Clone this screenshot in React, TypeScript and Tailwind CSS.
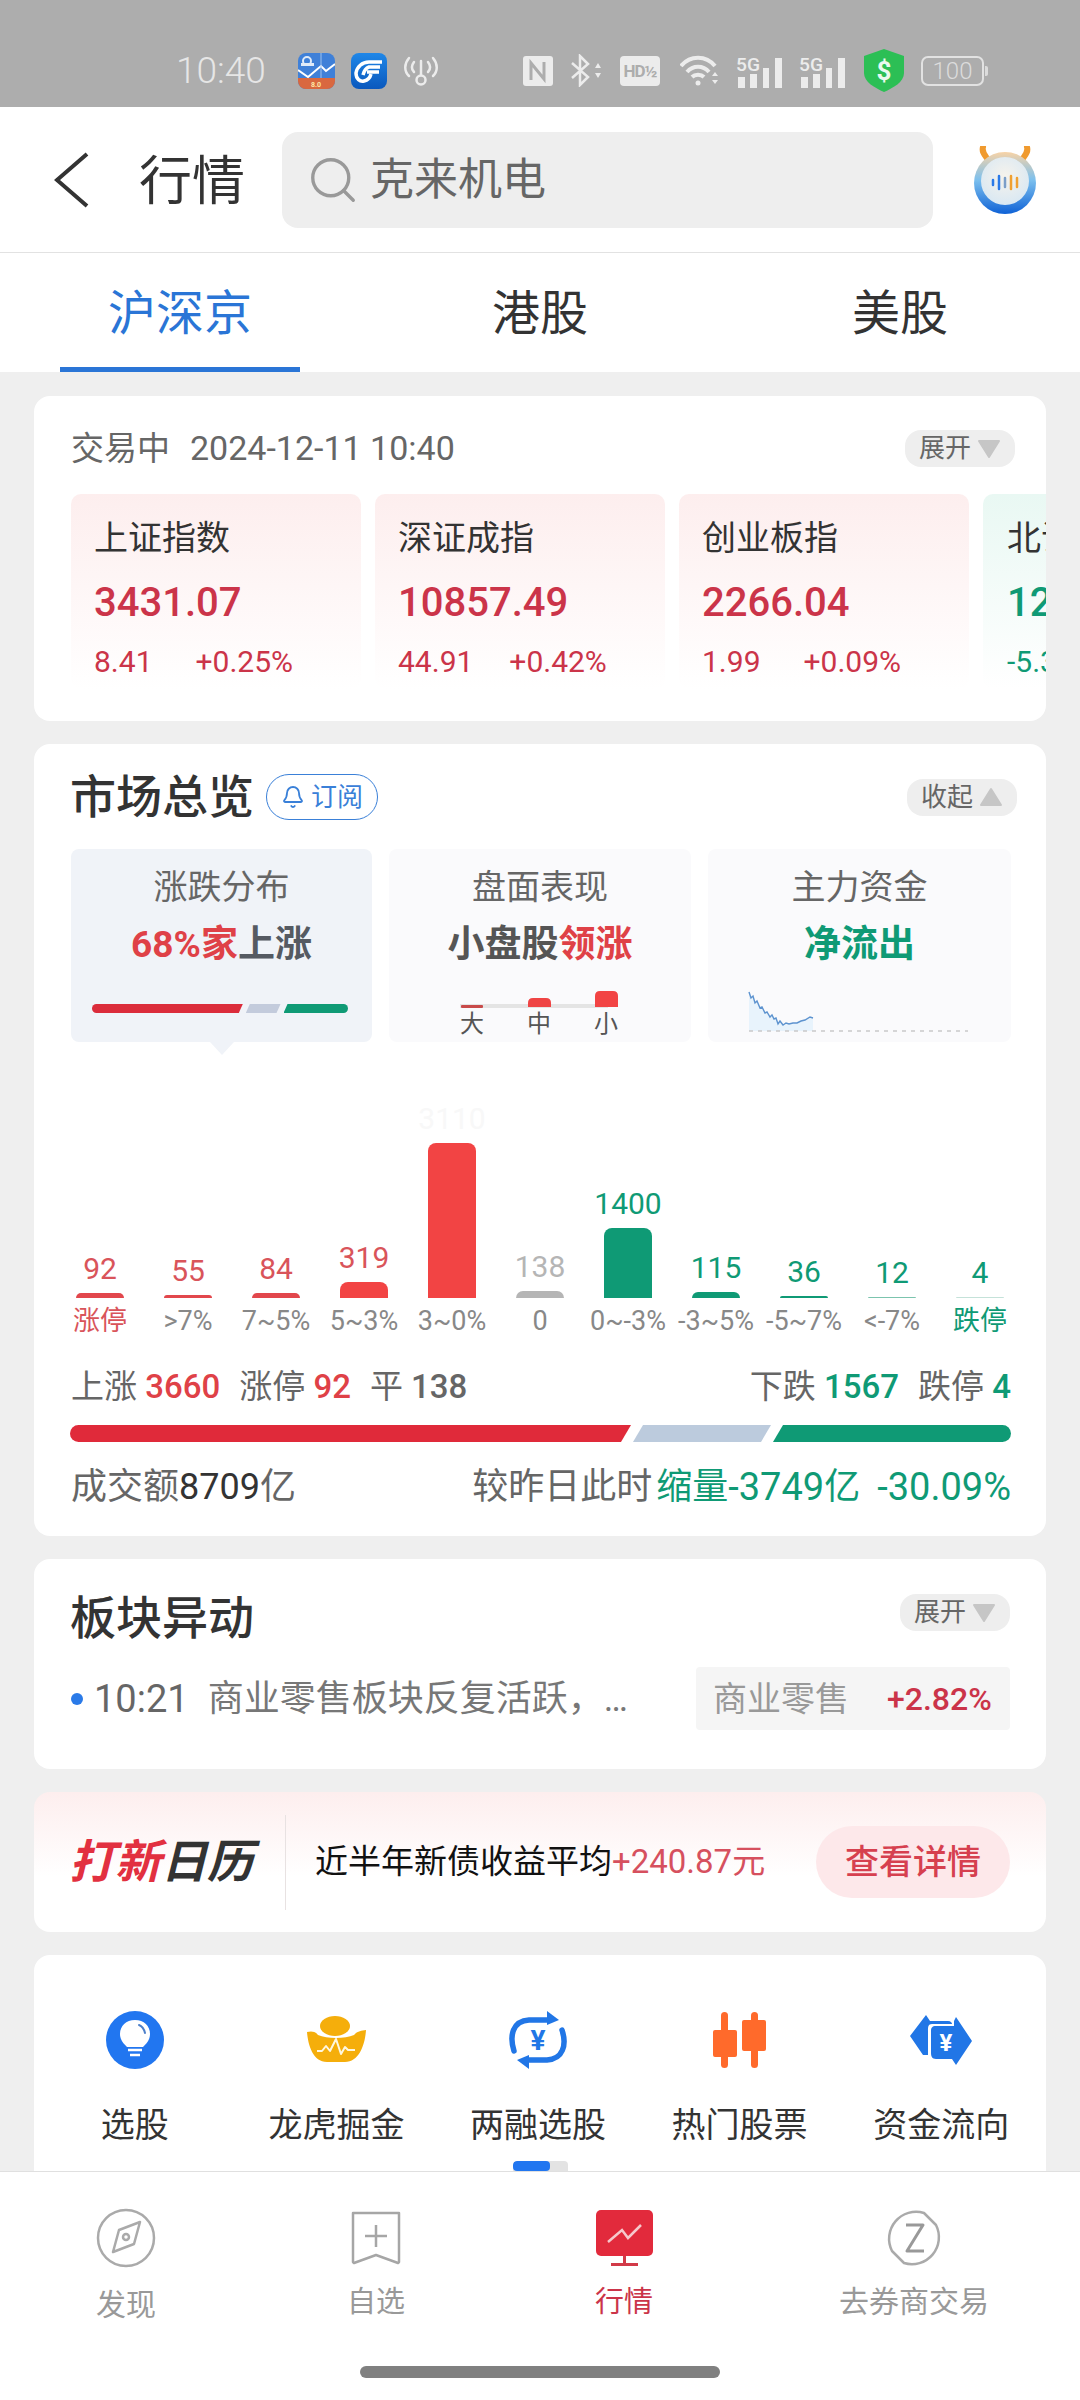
import React from "react";
import { Bell, Search } from "lucide-react";

const RED = "text-[#cb3449]";
const GREEN = "text-[#0f9a75]";

function Tri({ up = false }: { up?: boolean }) {
  return (
    <svg width="24" height="20" viewBox="0 0 24 20" className="ml-[6px]">
      <path d={up ? "M12 2 L22 18 L2 18 Z" : "M2 2 L22 2 L12 18 Z"} fill="#c6c6c6" stroke="#c6c6c6" strokeWidth="2" strokeLinejoin="round" />
    </svg>
  );
}

function Pill({ label, up = false }: { label: string; up?: boolean }) {
  return (
    <div className="flex h-[37px] w-[110px] items-center justify-center rounded-[16px] bg-[#eeeeee] text-[26px] leading-[37px] text-[#666666]">
      {label}
      <Tri up={up} />
    </div>
  );
}

function AppIcon1() {
  return (
    <svg width="37" height="36" viewBox="0 0 37 36">
      <defs>
        <clipPath id="a1"><rect width="37" height="36" rx="8" /></clipPath>
      </defs>
      <g clipPath="url(#a1)">
        <rect width="37" height="36" fill="#3f80d8" />
        <rect y="25" width="37" height="11" fill="#d9683f" />
        <path d="M0 17 L10 24 L23 13 L28 18 L37 11" fill="none" stroke="#fff" strokeWidth="2" />
        <path d="M23 0 V25" stroke="#9fc2ee" strokeWidth="1" />
        <circle cx="9" cy="8" r="4" fill="none" stroke="#dfeaf8" strokeWidth="2" />
        <rect x="3" y="10" width="13" height="3" fill="#dfeaf8" />
        <text x="18" y="34" fontSize="7" fontWeight="700" textAnchor="middle" fill="#ffe9a8">8.0</text>
      </g>
    </svg>
  );
}

function AppIcon2() {
  return (
    <svg width="36" height="36" viewBox="0 0 36 36" className="ml-[16px]">
      <defs>
        <linearGradient id="a2" x1="0" y1="0" x2="0" y2="1">
          <stop offset="0" stopColor="#1f87e8" />
          <stop offset="1" stopColor="#0a58bd" />
        </linearGradient>
      </defs>
      <rect width="36" height="36" rx="8" fill="url(#a2)" />
      <path d="M31 9 H18 C11 9 6 14 5 20 C5 26 9 29 13 28 C17 27 19 25 20 21" fill="none" stroke="#fff" strokeWidth="3.5" />
      <path d="M29 14 H18 C15 15 13 18 12 22 M28 19 H16" fill="none" stroke="#fff" strokeWidth="3.5" />
    </svg>
  );
}

function Signal() {
  const c = "#ececec";
  return (
    <svg width="48" height="34" viewBox="0 0 48 34" className="ml-[15px]">
      <rect x="3" y="23" width="7" height="11" fill={c} />
      <rect x="15" y="20" width="7" height="14" fill={c} />
      <rect x="28" y="14" width="6" height="20" fill={c} />
      <rect x="40" y="4" width="7" height="30" fill={c} />
      <text x="1" y="17" fontSize="18" fontWeight="500" fill={c} textLength="24" lengthAdjust="spacingAndGlyphs">5G</text>
    </svg>
  );
}

function StatusIcons() {
  const c = "#ececec";
  return (
    <>
      <svg width="36" height="30" viewBox="0 0 36 30" className="ml-[16px]" fill="none" stroke={c} strokeWidth="2.5" strokeLinecap="round">
        <path d="M6 2 C1 8 1 15 6 20" />
        <path d="M11 6 C8 10 8 13 11 16" />
        <path d="M30 2 C35 8 35 15 30 20" />
        <path d="M25 6 C28 10 28 13 25 16" />
        <path d="M18 5 V19" />
        <circle cx="18" cy="24" r="4.5" />
      </svg>
      <svg width="30" height="30" viewBox="0 0 30 30" className="ml-[84px]">
        <rect width="30" height="30" rx="3" fill={c} />
        <path d="M8 24 V7 L21 23 V6" fill="none" stroke="#adadad" strokeWidth="3" />
      </svg>
      <svg width="33" height="33" viewBox="0 0 33 33" className="ml-[17px]" fill="none" stroke={c} strokeWidth="2.5">
        <path d="M2 9 L18 23 L10 31 V2 L18 10 L2 24" />
        <path d="M25 14 L28 9 L31 14 Z M25 19 L28 24 L31 19 Z" fill={c} stroke="none" />
      </svg>
      <div className="ml-[17px] flex h-[30px] w-[40px] items-center justify-center rounded-[4px] bg-[#ececec] text-[17px] font-bold leading-[30px] tracking-[-1px] text-[#adadad]">
        HD½
      </div>
      <svg width="40" height="33" viewBox="0 0 40 33" className="ml-[20px]" fill="none" stroke={c} strokeWidth="4">
        <path d="M1 12 C10 1 26 1 35 12" />
        <path d="M7 18 C13 11 23 11 29 18" />
        <path d="M12 23 C15 20 21 20 24 23" />
        <circle cx="18" cy="29" r="2.5" fill={c} stroke="none" />
        <path d="M32 22 L35 18 L38 22 Z M32 26 L35 30 L38 26 Z" fill={c} stroke="none" />
      </svg>
      <Signal />
      <Signal />
      <svg width="42" height="43" viewBox="0 0 42 43" className="ml-[17px]">
        <path d="M21 0 L41 7 V24 C41 33 30 39 21 43 C12 39 1 33 1 24 V7 Z" fill="#2cbf55" />
        <text x="21" y="31" fontSize="26" fontWeight="700" textAnchor="middle" fill="#e9f9ee">$</text>
      </svg>
      <div className="ml-[16px] flex items-center">
        <div className="flex h-[30px] w-[63px] items-center justify-center rounded-[7px] border-2 border-[#e2e2e2] text-[24px] font-light leading-[26px] text-[#dcdcdc]">100</div>
        <div className="ml-[1px] h-[10px] w-[3px] rounded-r-[2px] bg-[#dcdcdc]" />
      </div>
    </>
  );
}

function Avatar() {
  return (
    <svg width="64" height="68" viewBox="0 0 64 68" className="ml-[40px]">
      <defs>
        <linearGradient id="ring" x1="0" y1="0" x2="0" y2="1">
          <stop offset="0" stopColor="#f8d3a6" />
          <stop offset="0.45" stopColor="#7cc0ee" />
          <stop offset="1" stopColor="#0f62d6" />
        </linearGradient>
        <radialGradient id="ctr" cx="0.5" cy="0.4" r="0.6">
          <stop offset="0" stopColor="#f6f3ec" />
          <stop offset="1" stopColor="#d9e8f3" />
        </radialGradient>
      </defs>
      <path d="M10 1 C8 8 15 11 17 18" fill="none" stroke="#f09a2e" strokeWidth="6" strokeLinecap="round" />
      <path d="M54 1 C56 8 49 11 47 18" fill="none" stroke="#f09a2e" strokeWidth="6" strokeLinecap="round" />
      <circle cx="32" cy="37" r="31" fill="url(#ring)" />
      <circle cx="32" cy="35" r="24" fill="url(#ctr)" />
      {[
        [20, 34, 39, "#2a7ae8"],
        [26, 30, 43, "#2a7ae8"],
        [32, 32, 41, "#7b9ec8"],
        [38, 30, 43, "#f0a030"],
        [44, 32, 41, "#f0a030"],
      ].map(([x, y1, y2, s], i) => (
        <line key={i} x1={x as number} x2={x as number} y1={y1 as number} y2={y2 as number} stroke={s as string} strokeWidth="2.5" strokeLinecap="round" />
      ))}
    </svg>
  );
}

const indices = [
  { n: "上证指数", v: "3431.07", a: "8.41", p: "+0.25%", gap: "ml-[43px]" },
  { n: "深证成指", v: "10857.49", a: "44.91", p: "+0.42%", gap: "ml-[36px]" },
  { n: "创业板指", v: "2266.04", a: "1.99", p: "+0.09%", gap: "ml-[43px]" },
];

function IndexTile({ n, v, a, p, gap }: (typeof indices)[number]) {
  return (
    <div className="h-[195px] w-[290px] shrink-0 rounded-[10px] bg-gradient-to-b from-[#fdeeee] to-[#ffffff] pl-[23px]">
      <div className="mt-[23px] h-[42px] text-[34px] leading-[42px] text-[#333333]">{n}</div>
      <div className={`mt-[23px] h-[42px] text-[40px] font-medium leading-[42px] ${RED}`}>{v}</div>
      <div className={`mt-[20px] flex h-[36px] whitespace-nowrap text-[30px] leading-[36px] ${RED}`}>
        <span>{a}</span>
        <span className={gap}>{p}</span>
      </div>
    </div>
  );
}

const bars = [
  { v: "92", h: 5, l: "涨停", c: "bg-[#e2474c]", t: "text-[#d9545a]", lt: "text-[#d9545a]" },
  { v: "55", h: 3, l: ">7%", c: "bg-[#e2474c]", t: "text-[#d9545a]", lt: "text-[#888888]" },
  { v: "84", h: 5, l: "7~5%", c: "bg-[#e2474c]", t: "text-[#d9545a]", lt: "text-[#888888]" },
  { v: "319", h: 16, l: "5~3%", c: "bg-[#f24444]", t: "text-[#d9545a]", lt: "text-[#888888]" },
  { v: "3110", h: 155, l: "3~0%", c: "bg-[#f24444]", t: "text-[#f8f8f8]", lt: "text-[#888888]" },
  { v: "138", h: 7, l: "0", c: "bg-[#b5b5b5]", t: "text-[#b5b5b5]", lt: "text-[#888888]" },
  { v: "1400", h: 70, l: "0~-3%", c: "bg-[#0f9a75]", t: "text-[#0f9a75]", lt: "text-[#888888]" },
  { v: "115", h: 6, l: "-3~5%", c: "bg-[#0f9a75]", t: "text-[#0f9a75]", lt: "text-[#888888]" },
  { v: "36", h: 2, l: "-5~7%", c: "bg-[#0f9a75]", t: "text-[#0f9a75]", lt: "text-[#888888]" },
  { v: "12", h: 1, l: "<-7%", c: "bg-[#7cc4ae]", t: "text-[#0f9a75]", lt: "text-[#888888]" },
  { v: "4", h: 1, l: "跌停", c: "bg-[#c5e2d9]", t: "text-[#0f9a75]", lt: "text-[#0f9a75]" },
];

function Bulb() {
  return (
    <svg width="58" height="58" viewBox="0 0 58 58">
      <circle cx="29" cy="29" r="29" fill="#2176f0" />
      <path d="M29 9 C38 9 44 15 44 23 C44 29 40 33 37 36 H21 C18 33 14 29 14 23 C14 15 20 9 29 9 Z" fill="#fff" />
      <path d="M22 39 H36 M24 44 H34" stroke="#fff" strokeWidth="2.5" />
      <path d="M33 14 C36 15 38 18 39 22" fill="none" stroke="#4d7fc9" strokeWidth="2" strokeLinecap="round" />
    </svg>
  );
}
function Ingot() {
  return (
    <svg width="62" height="50" viewBox="0 0 62 50">
      <ellipse cx="30" cy="11" rx="15" ry="10" fill="#f5ae0b" />
      <path d="M2 17 C6 16 10 16 13 20 C22 24 40 24 49 20 C52 16 56 16 61 15 C60 30 54 47 40 47 H22 C8 47 3 30 2 17 Z" fill="#f5ae0b" />
      <path d="M12 36 L17 36 L21 31 L25 36 L31 24 L36 39 L40 32 L43 35 L50 35" fill="none" stroke="#fff7df" strokeWidth="2" strokeLinejoin="round" />
    </svg>
  );
}
function Exchange() {
  return (
    <svg width="58" height="58" viewBox="0 0 58 58">
      <path d="M5 40 C0 24 4 10 20 9 H40" fill="none" stroke="#2176e6" strokeWidth="5.5" strokeLinecap="round" />
      <path d="M38 0 L50 9 L38 14 Z" fill="#2176e6" />
      <path d="M53 19 C58 34 54 48 38 49 H18" fill="none" stroke="#2176e6" strokeWidth="5.5" strokeLinecap="round" />
      <path d="M20 58 L8 49 L20 44 Z" fill="#2176e6" />
      <text x="29" y="39" fontSize="28" fontWeight="700" textAnchor="middle" fill="#2176e6">¥</text>
    </svg>
  );
}
function Candles() {
  return (
    <svg width="55" height="56" viewBox="0 0 55 56" fill="#ff6a2b">
      <rect x="9" y="0" width="7" height="56" rx="3.5" />
      <rect x="1" y="18" width="24" height="27" rx="2" />
      <rect x="39" y="0" width="7" height="56" rx="3.5" />
      <rect x="30" y="8" width="24" height="31" rx="2" />
    </svg>
  );
}
function Flow() {
  return (
    <svg width="62" height="50" viewBox="0 0 62 50">
      <path d="M16 0 L20 6 H38 C41 6 42 8 42 9 H22 C18 9 18 12 18 16 V40 L13 40 L0 21 Z" fill="#2176e6" />
      <path d="M46 50 L42 44 H26 C22 44 21 41 21 38 V16 C21 13 22 11 26 11 H42 C43 11 44 11 44 11 V6 L46 2 L62 26 Z" fill="#2176e6" />
      <text x="36" y="36" fontSize="24" fontWeight="700" textAnchor="middle" fill="#fff">¥</text>
    </svg>
  );
}

const features = [
  { l: "选股", i: <Bulb /> },
  { l: "龙虎掘金", i: <Ingot /> },
  { l: "两融选股", i: <Exchange /> },
  { l: "热门股票", i: <Candles /> },
  { l: "资金流向", i: <Flow /> },
];

function Compass() {
  return (
    <svg width="60" height="60" viewBox="0 0 60 60" fill="none" stroke="#aaaaaa" strokeWidth="2.5">
      <circle cx="30" cy="30" r="28" />
      <path d="M44 14 L38 36 L17 44 L23 22 Z" strokeLinejoin="round" />
      <circle cx="30" cy="29" r="3" />
    </svg>
  );
}
function Mark() {
  return (
    <svg width="50" height="54" viewBox="0 0 50 54" fill="none" stroke="#a6a6a6" strokeWidth="2.5">
      <path d="M2 2 H48 V51 L47 52 L25 44 L3 52 L2 51 Z" strokeLinejoin="round" />
      <path d="M25 14 V36 M14 25 H36" />
    </svg>
  );
}
function Monitor() {
  return (
    <svg width="57" height="56" viewBox="0 0 57 56">
      <rect width="57" height="46" rx="5" fill="#e22a3c" />
      <path d="M12 32 L26 20 L32 28 L45 15" fill="none" stroke="#f6c8cc" strokeWidth="2.5" />
      <path d="M28.5 46 V54 M15 54.5 H42" stroke="#d23a48" strokeWidth="3" />
    </svg>
  );
}
function ZIcon() {
  return (
    <svg width="56" height="58" viewBox="0 0 56 58" fill="none" stroke="#aaaaaa" strokeWidth="2.5" strokeLinejoin="round">
      <path d="M6 42 A27 27 0 0 1 38 4 L50 16 A27 27 0 0 1 18 54 Z" />
      <path d="M20 16 H37 L21 42 H38" stroke="#999999" strokeWidth="3" />
    </svg>
  );
}

const nav = [
  { l: "发现", i: <Compass />, w: "w-[252px]", t: "mt-[20px] text-[#999999] text-[30px]" },
  { l: "自选", i: <Mark />, w: "w-[248px]", t: "mt-[17px] text-[#999999] text-[29px]" },
  { l: "行情", i: <Monitor />, w: "w-[248px]", t: "mt-[17px] text-[#cb3449] text-[29px]" },
  { l: "去券商交易", i: <ZIcon />, w: "w-[332px]", t: "mt-[17px] text-[#999999] text-[30px]" },
];

export default function App() {
  return (
    <div className="flex h-[2400px] w-[1080px] flex-col overflow-hidden bg-white [font-family:Roboto,'Noto_Sans_CJK_SC',sans-serif]">
      {/* status bar */}
      <div className="flex h-[107px] shrink-0 items-center bg-[#adadad] pl-[176px] pt-[34px]">
        <span className="w-[122px] text-[37px] font-light leading-[42px] text-[#e6e6e6]">10:40</span>
        <AppIcon1 />
        <AppIcon2 />
        <StatusIcons />
      </div>

      {/* header */}
      <div className="flex h-[146px] shrink-0 items-center border-b border-b-[#e2e2e2] pl-[54px]">
        <svg width="35" height="56" viewBox="0 0 35 56" fill="none" stroke="#333333" strokeWidth="4">
          <path d="M33 2 L3 28 L33 54" />
        </svg>
        <span className="ml-[50px] mt-[4px] text-[53px] leading-[60px] text-[#333333]">行情</span>
        <div className="ml-[37px] flex h-[96px] w-[651px] items-center rounded-[16px] bg-[#eeeeee] pl-[24px]">
          <Search size={54} strokeWidth={1.5} className="text-[#999999]" />
          <span className="ml-[10px] text-[44px] leading-[52px] text-[#666666]">克来机电</span>
        </div>
        <Avatar />
      </div>

      {/* market tabs */}
      <div className="grid h-[119px] shrink-0 grid-cols-3 bg-white">
        <div className="flex flex-col items-center pt-[37px]">
          <span className="text-[48px] leading-[48px] text-[#2a75d6]">沪深京</span>
          <div className="mt-auto h-[5px] w-[240px] bg-[#2a75d6]" />
        </div>
        <div className="flex flex-col items-center pt-[37px]">
          <span className="text-[48px] leading-[48px] text-[#333333]">港股</span>
        </div>
        <div className="flex flex-col items-center pt-[37px]">
          <span className="text-[48px] leading-[48px] text-[#333333]">美股</span>
        </div>
      </div>

      {/* scrolling content */}
      <div className="flex min-h-0 flex-1 flex-col gap-[23px] overflow-hidden bg-[#efefef] pl-[34px] pt-[24px]">
        {/* indices */}
        <section className="h-[325px] w-[1012px] shrink-0 overflow-hidden rounded-[16px] bg-white">
          <div className="ml-[37px] mr-[31px] mt-[34px] flex h-[37px] items-center justify-between">
            <div className="flex text-[33px] leading-[37px] text-[#666666]">
              <span>交易中</span>
              <span className="ml-[20px] text-[34px]">2024-12-11 10:40</span>
            </div>
            <Pill label="展开" />
          </div>
          <div className="ml-[37px] mt-[27px] flex gap-[14px]">
            {indices.map((d) => (
              <IndexTile key={d.n} {...d} />
            ))}
            <div className="h-[195px] w-[290px] shrink-0 rounded-[10px] bg-gradient-to-b from-[#e9f8f3] to-[#ffffff] pl-[24px]">
              <div className="mt-[23px] h-[42px] text-[34px] leading-[42px] text-[#333333]">北证50</div>
              <div className={`mt-[23px] h-[42px] text-[40px] font-medium leading-[42px] ${GREEN}`}>1256.38</div>
              <div className={`mt-[20px] h-[36px] text-[30px] leading-[36px] ${GREEN}`}>-5.32</div>
            </div>
          </div>
        </section>

        {/* overview */}
        <section className="h-[792px] w-[1012px] shrink-0 rounded-[16px] bg-white">
          <div className="ml-[36px] mr-[29px] flex h-[46px] translate-y-[30px] items-center">
            <span className="text-[46px] font-medium leading-[46px] text-[#333333]">市场总览</span>
            <div className="ml-[12px] flex h-[46px] w-[112px] items-center justify-center rounded-full border-[1.5px] border-[#3a80d8] text-[26px] leading-[44px] text-[#3a80d8]">
              <Bell size={24} strokeWidth={1.8} />
              <span className="ml-[6px]">订阅</span>
            </div>
            <div className="ml-auto">
              <Pill label="收起" up />
            </div>
          </div>

          <div className="relative ml-[37px] mt-[59px] flex h-[193px] w-[940px] gap-[17px]">
            <div className="h-[193px] w-[301px] shrink-0 rounded-[8px] bg-[#f0f3f8] text-center">
              <div className="mt-[18px] h-[40px] text-[34px] leading-[40px] text-[#666666]">涨跌分布</div>
              <div className="mt-[18px] h-[40px] text-[37px] font-bold leading-[40px] text-[#555a62]">
                <span className="text-[#df4147]">68%家</span>上涨
              </div>
              <div className="ml-[21px] mt-[39px] flex h-[9px] w-[256px] gap-[3px]">
                <div className="h-[9px] w-[152px] rounded-l-full bg-[#db2c3b] [clip-path:polygon(0_0,100%_0,calc(100%-4px)_100%,0_100%)]" />
                <div className="h-[9px] w-[35px] bg-[#c3cbdc] [clip-path:polygon(4px_0,100%_0,calc(100%-4px)_100%,0_100%)]" />
                <div className="h-[9px] w-[65px] rounded-r-full bg-[#0f9a75] [clip-path:polygon(4px_0,100%_0,100%_100%,0_100%)]" />
              </div>
            </div>
            <div className="h-[193px] w-[302px] shrink-0 rounded-[8px] bg-[#fafafc] text-center">
              <div className="mt-[18px] h-[40px] text-[34px] leading-[40px] text-[#666666]">盘面表现</div>
              <div className="mt-[18px] h-[40px] text-[37px] font-bold leading-[40px] text-[#555555]">
                小盘股<span className="text-[#df4147]">领涨</span>
              </div>
              <svg width="297" height="20" viewBox="0 0 297 20" className="ml-[3px] mt-[26px] block">
                <rect x="68" y="13" width="148" height="4" fill="#e4e4e4" />
                <rect x="69" y="14" width="22" height="3" rx="1" fill="#c84a4a" />
                <path d="M136 16 V12 Q136 7 141 7 H154 Q159 7 159 12 V16 Z" fill="#ef4444" />
                <path d="M203 16 V5 Q203 0 208 0 H221 Q226 0 226 5 V16 Z" fill="#f24444" />
              </svg>
              <div className="flex gap-[43px] pl-[71px] text-[24px] leading-[26px] text-[#555555]">
                <span className="w-[24px]">大</span>
                <span className="w-[24px]">中</span>
                <span className="w-[24px]">小</span>
              </div>
            </div>
            <div className="h-[193px] w-[303px] shrink-0 rounded-[8px] bg-[#fafafc] text-center">
              <div className="mt-[18px] h-[40px] text-[34px] leading-[40px] text-[#666666]">主力资金</div>
              <div className="mt-[18px] h-[40px] text-[37px] font-bold leading-[40px] text-[#0f9a75]">净流出</div>
              <svg width="300" height="46" viewBox="0 0 300 46" className="ml-[3px] mt-[25px] block">
                <path d="M38 2 L40 8 L42 6 L44 13 L46 11 L49 18 L51 17 L54 23 L56 22 L59 27 L61 25 L63 29 L65 28 L67 34 L69 31 L72 35 L75 33 L78 34 L82 33 L86 33 L90 31 L94 30 L99 27 L102 28 V41 H38 Z" fill="#e8f3fc" />
                <path d="M38 2 L40 8 L42 6 L44 13 L46 11 L49 18 L51 17 L54 23 L56 22 L59 27 L61 25 L63 29 L65 28 L67 34 L69 31 L72 35 L75 33 L78 34 L82 33 L86 33 L90 31 L94 30 L99 27 L102 28" fill="none" stroke="#5d93cf" strokeWidth="1.4" />
                <path d="M38 41 H257" stroke="#c9c9c9" strokeWidth="1.5" strokeDasharray="4 5" />
              </svg>
            </div>
            <div className="absolute left-[139px] top-[193px] h-[13px] w-[24px] bg-[#f0f3f8] [clip-path:polygon(0_0,100%_0,50%_100%)]" />
          </div>

          {/* distribution */}
          <div className="ml-[22px] flex h-[293px] items-end">
            {bars.map((b) => (
              <div key={b.l} className="flex w-[88px] shrink-0 flex-col items-center">
                <span className={`mb-[7px] h-[34px] text-[30px] leading-[34px] ${b.t}`}>{b.v}</span>
                <div className={`w-[48px] rounded-t-[8px] ${b.c}`} style={{ height: b.h }} />
                <span className={`mt-[10px] h-[27px] whitespace-nowrap text-[27px] leading-[27px] ${b.lt}`}>{b.l}</span>
              </div>
            ))}
          </div>

          <div className="ml-[37px] mr-[35px] mt-[32px] flex h-[40px] items-center justify-between text-[33px] leading-[40px] text-[#666666]">
            <div className="flex gap-[19px]">
              <span>
                上涨 <b className="font-medium text-[#df4147]">3660</b>
              </span>
              <span>
                涨停 <b className="font-medium text-[#df4147]">92</b>
              </span>
              <span>
                平 <b className="font-medium text-[#666666]">138</b>
              </span>
            </div>
            <div className="flex gap-[19px]">
              <span>
                下跌 <b className={`font-medium ${GREEN}`}>1567</b>
              </span>
              <span>
                跌停 <b className={`font-medium ${GREEN}`}>4</b>
              </span>
            </div>
          </div>

          <div className="ml-[36px] mt-[18px] flex h-[17px] w-[941px] gap-[2px]">
            <div className="h-[17px] w-[561px] rounded-l-full bg-[#e02a3a] [clip-path:polygon(0_0,100%_0,calc(100%-10px)_100%,0_100%)]" />
            <div className="h-[17px] w-[138px] bg-[#bccbdd] [clip-path:polygon(10px_0,100%_0,calc(100%-10px)_100%,0_100%)]" />
            <div className="h-[17px] w-[238px] rounded-r-full bg-[#0f9a75] [clip-path:polygon(10px_0,100%_0,100%_100%,0_100%)]" />
          </div>

          <div className="ml-[37px] mr-[35px] mt-[25px] flex h-[40px] items-center justify-between text-[36px] leading-[40px] text-[#666666]">
            <span>
              成交额<span className="text-[#333333]">8709</span>亿
            </span>
            <span className="flex items-center whitespace-nowrap">
              较昨日此时
              <span className={`ml-[4px] ${GREEN}`}>缩量</span>
              <span className={`text-[38px] ${GREEN}`}>-3749</span>
              <span className={GREEN}>亿</span>
              <span className={`ml-[17px] text-[38px] ${GREEN}`}>-30.09%</span>
            </span>
          </div>
        </section>

        {/* sector moves */}
        <section className="h-[210px] w-[1012px] shrink-0 rounded-[16px] bg-white pl-[37px] pr-[36px] pt-[35px]">
          <div className="flex h-[42px] items-start justify-between">
            <span className="-ml-[1px] mt-[2px] text-[46px] font-medium leading-[44px] text-[#333333]">板块异动</span>
            <Pill label="展开" />
          </div>
          <div className="mt-[31px] flex h-[63px] items-center">
            <div className="h-[12px] w-[12px] rounded-full bg-[#2a7ae8]" />
            <span className="ml-[11px] text-[38px] leading-[40px] text-[#666666]">10:21</span>
            <span className="ml-[19px] w-[488px] overflow-hidden whitespace-nowrap text-[36px] leading-[40px] text-[#777777]">商业零售板块反复活跃，…</span>
            <div className="ml-auto flex h-[63px] w-[314px] items-center rounded-[4px] bg-[#f5f5f5] pl-[17px]">
              <span className="text-[34px] leading-[40px] text-[#999999]">商业零售</span>
              <span className={`ml-[38px] text-[32px] font-medium leading-[40px] ${RED}`}>+2.82%</span>
            </div>
          </div>
        </section>

        {/* ipo calendar */}
        <section className="flex h-[140px] w-[1012px] shrink-0 items-center rounded-[16px] bg-gradient-to-b from-[#fdeeee] to-[#ffffff] to-60% pl-[35px] pr-[36px]">
          <span className="w-[186px] whitespace-nowrap text-[46px] font-bold italic leading-[50px] text-[#333333]">
            <span className="text-[#e23040]">打新</span>日历
          </span>
          <div className="ml-[30px] h-[95px] w-px bg-[#e8e2e2]" />
          <span className="ml-[29px] whitespace-nowrap text-[33px] leading-[40px] text-[#111111]">
            近半年新债收益平均<span className="text-[#d6505e]">+240.87元</span>
          </span>
          <div className="ml-auto flex h-[72px] w-[194px] items-center justify-center rounded-[36px] bg-[#fde8ea] text-[34px] font-medium leading-[40px] text-[#d6404f]">
            查看详情
          </div>
        </section>

        {/* shortcuts */}
        <section className="h-[217px] w-[1012px] shrink-0 rounded-t-[16px] bg-white pt-[55px]">
          <div className="grid w-[1008px] grid-cols-5">
            {features.map((f) => (
              <div key={f.l} className="flex flex-col items-center">
                <div className="flex h-[60px] items-center justify-center">{f.i}</div>
                <span className="mt-[34px] h-[42px] text-[34px] leading-[42px] text-[#333333]">{f.l}</span>
              </div>
            ))}
          </div>
          <div className="mx-auto mt-[15px] h-[10px] w-[55px] overflow-hidden rounded-t-[4px] bg-[#e3e3e3]">
            <div className="h-[10px] w-[37px] rounded-[4px] bg-[#2176f0]" />
          </div>
        </section>
      </div>

      {/* bottom navigation */}
      <nav className="flex h-[229px] shrink-0 flex-col border-t border-t-[#e0e0e0] bg-white">
        <div className="flex h-[194px]">
          {nav.map((n) => (
            <div key={n.l} className={`${n.w} flex flex-col items-center pt-[36px]`}>
              <div className="flex h-[60px] items-center justify-center">{n.i}</div>
              <span className={`h-[34px] leading-[34px] ${n.t}`}>{n.l}</span>
            </div>
          ))}
        </div>
        <div className="mx-auto h-[12px] w-[360px] rounded-full bg-[#808080]" />
      </nav>
    </div>
  );
}
